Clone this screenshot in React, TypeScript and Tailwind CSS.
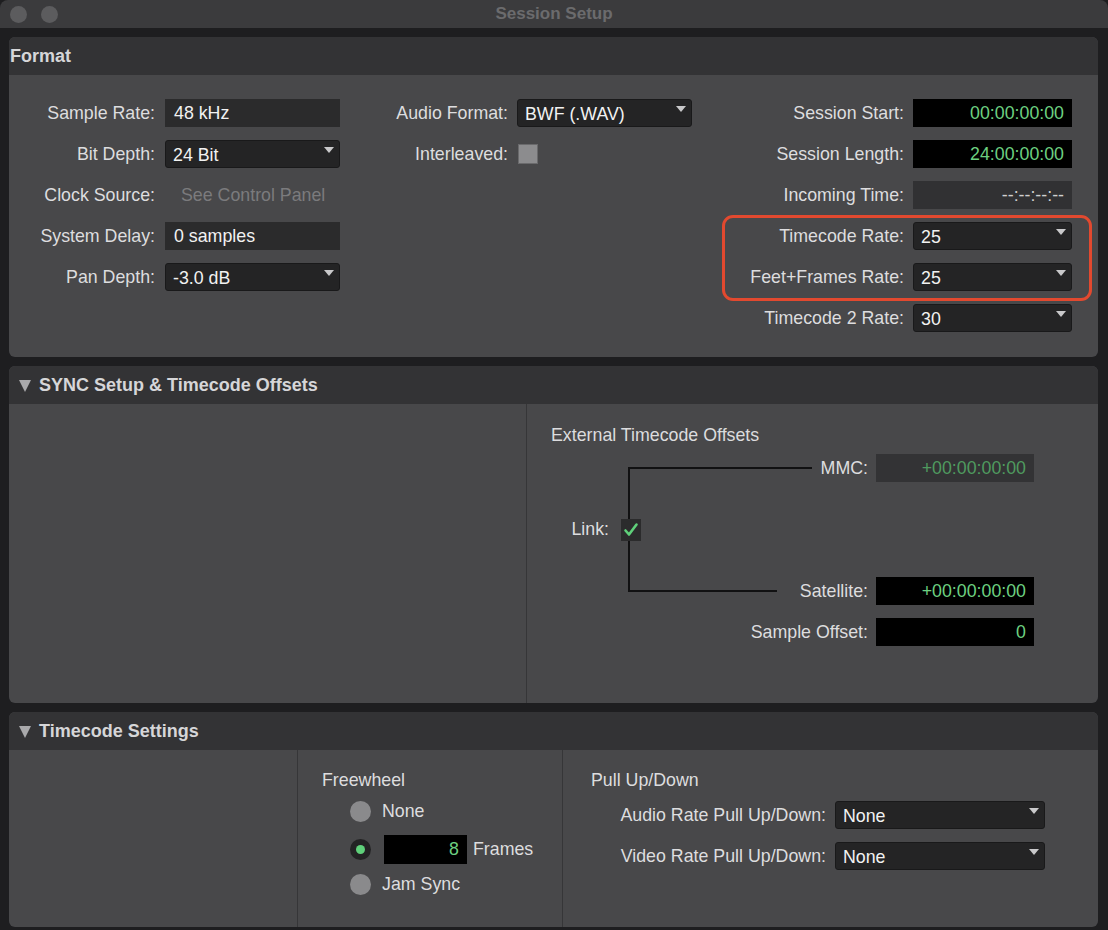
import React from "react";

const FONT = { fontFamily: '"Liberation Sans", Arial, Helvetica, sans-serif' };

function Tri() {
  return (
    <span className="ml-auto mr-[5px] mt-[6px] h-0 w-0 self-start border-l-[5px] border-r-[5px] border-t-[6px] border-l-transparent border-r-transparent border-t-[#c9c9cb]" />
  );
}

function Dropdown({ value, w }: { value: string; w: string }) {
  return (
    <div className={`flex h-[28px] items-center rounded-[3px] border border-[#19191a] bg-[#242425] pl-[7px] text-[#f2f2f2] ${w}`}>
      <span className="pt-[2px]">{value}</span>
      <Tri />
    </div>
  );
}

function Field({ value, w }: { value: string; w: string }) {
  return (
    <div className={`flex h-[28px] items-center bg-[#2b2b2c] pl-[9px] text-[#f2f2f2] ${w}`}>{value}</div>
  );
}

function TC({ value, w, dim, dark }: { value: string; w: string; dim?: boolean; dark?: boolean }) {
  const cls = dark
    ? "bg-[#313133] text-[#cfcfcf]"
    : dim
    ? "bg-[#333335] text-[#4f9a5f]"
    : "bg-black text-[#6dd081]";
  return (
    <div className={`flex h-[28px] items-center justify-end pr-[8px] ${cls} ${w}`}>{value}</div>
  );
}

function Row({ label, lw, children }: { label: string; lw: string; children: React.ReactNode }) {
  return (
    <div className="flex h-[28px] items-center">
      <div className={`${lw} shrink-0 text-right text-[#dddddf]`}>{label}</div>
      {children}
    </div>
  );
}

function Header({ title, arrow }: { title: string; arrow?: boolean }) {
  return (
    <div className="flex h-[38px] items-center rounded-t-[6px] bg-[#333335] text-[18px] font-bold text-[#d6d6d8]">
      {arrow ? (
        <>
          <span className="ml-[10px] mr-[8px] mt-[2px] h-0 w-0 border-l-[6px] border-r-[6px] border-t-[12px] border-l-transparent border-r-transparent border-t-[#a9a9ab]" />
          <span>{title}</span>
        </>
      ) : (
        <span className="ml-[1px]">{title}</span>
      )}
    </div>
  );
}

function Radio({ on }: { on?: boolean }) {
  return on ? (
    <span className="flex h-[21px] w-[21px] shrink-0 items-center justify-center rounded-full bg-[#232324]">
      <span className="h-[9px] w-[9px] rounded-full bg-[#5fd07a]" />
    </span>
  ) : (
    <span className="h-[21px] w-[21px] shrink-0 rounded-full bg-[#8a8a8c]" />
  );
}

export default function App() {
  return (
    <div style={FONT} className="h-[930px] w-[1108px] overflow-hidden bg-[#1e1e20] text-[17.8px]">
      {/* Title bar */}
      <div className="relative flex h-[28px] items-center rounded-t-[8px] bg-[#3b3b3d]">
        <span className="ml-[10px] h-[17px] w-[17px] rounded-full bg-[#5c5c5e]" />
        <span className="ml-[14px] h-[17px] w-[17px] rounded-full bg-[#5c5c5e]" />
        <div className="absolute inset-0 flex items-center justify-center text-[17px] font-bold text-[#6b6b6d]">
          Session Setup
        </div>
      </div>

      <div className="flex flex-col gap-[9px] pl-[9px] pr-[10px] pt-[9px]">
        {/* Format */}
        <div className="rounded-[6px] bg-[#48484a]">
          <Header title="Format" />
          <div className="relative flex h-[282px] pt-[24px]">
            <div className="flex flex-col gap-[13px]">
              <Row label="Sample Rate:" lw="w-[156px] pr-[10px]">
                <Field value="48 kHz" w="w-[175px]" />
              </Row>
              <Row label="Bit Depth:" lw="w-[156px] pr-[10px]">
                <Dropdown value="24 Bit" w="w-[175px]" />
              </Row>
              <Row label="Clock Source:" lw="w-[156px] pr-[10px]">
                <span className="pl-[16px] text-[#7b7b7d]">See Control Panel</span>
              </Row>
              <Row label="System Delay:" lw="w-[156px] pr-[10px]">
                <Field value="0 samples" w="w-[175px]" />
              </Row>
              <Row label="Pan Depth:" lw="w-[156px] pr-[10px]">
                <Dropdown value="-3.0 dB" w="w-[175px]" />
              </Row>
            </div>
            <div className="ml-[7px] flex flex-col gap-[13px]">
              <Row label="Audio Format:" lw="w-[170px] pr-[9px]">
                <Dropdown value="BWF (.WAV)" w="w-[175px]" />
              </Row>
              <Row label="Interleaved:" lw="w-[170px] pr-[9px]">
                <span className="ml-[1px] h-[20px] w-[20px] border border-[#6a6a6c] bg-[#8c8c8e]" />
              </Row>
            </div>
            <div className="ml-[8px] flex flex-col gap-[13px]">
              <Row label="Session Start:" lw="w-[213px] pr-[9px]">
                <TC value="00:00:00:00" w="w-[159px]" />
              </Row>
              <Row label="Session Length:" lw="w-[213px] pr-[9px]">
                <TC value="24:00:00:00" w="w-[159px]" />
              </Row>
              <Row label="Incoming Time:" lw="w-[213px] pr-[9px]">
                <TC value="--:--:--:--" w="w-[159px]" dark />
              </Row>
              <Row label="Timecode Rate:" lw="w-[213px] pr-[9px]">
                <Dropdown value="25" w="w-[159px]" />
              </Row>
              <Row label="Feet+Frames Rate:" lw="w-[213px] pr-[9px]">
                <Dropdown value="25" w="w-[159px]" />
              </Row>
              <Row label="Timecode 2 Rate:" lw="w-[213px] pr-[9px]">
                <Dropdown value="30" w="w-[159px]" />
              </Row>
            </div>
            <div className="pointer-events-none absolute left-[713px] top-[140px] h-[86px] w-[370px] rounded-[11px] border-[3px] border-[#e2492f]" />
          </div>
        </div>

        {/* SYNC */}
        <div className="rounded-[6px] bg-[#48484a]">
          <Header title="SYNC Setup & Timecode Offsets" arrow />
          <div className="flex h-[299px]">
            <div className="w-[518px] border-r border-[#363638]" />
            <div className="relative flex flex-1 flex-col pl-[24px] pr-[64px] pt-[20px]">
              <svg className="absolute left-0 top-0" width="300" height="200">
                <path d="M285 64 H102 V187 H250" fill="none" stroke="#111112" strokeWidth="2" />
              </svg>
              <div className="relative h-[22px] leading-[22px] text-[#dcdcde]">External Timecode Offsets</div>
              <div className="relative mt-[8px] flex h-[28px] items-center justify-end">
                <span className="pr-[8px] text-[#dddddf]">MMC:</span>
                <TC value="+00:00:00:00" w="w-[158px]" dim />
              </div>
              <div className="relative flex h-[95px] items-center">
                <span className="w-[58px] text-right text-[#dddddf]">Link:</span>
                <span className="ml-[12px] flex h-[22px] w-[20px] items-center justify-center bg-[#2b2b2c]">
                  <svg width="16" height="16" viewBox="0 0 16 16">
                    <path d="M2.5 8.5 L6 12.5 L13.5 2.5" fill="none" stroke="#5fd07a" strokeWidth="2.6" strokeLinecap="round" strokeLinejoin="round" />
                  </svg>
                </span>
              </div>
              <div className="relative flex h-[28px] items-center justify-end">
                <span className="pr-[8px] text-[#dddddf]">Satellite:</span>
                <TC value="+00:00:00:00" w="w-[158px]" />
              </div>
              <div className="relative mt-[13px] flex h-[28px] items-center justify-end">
                <span className="pr-[8px] text-[#dddddf]">Sample Offset:</span>
                <TC value="0" w="w-[158px]" />
              </div>
            </div>
          </div>
        </div>

        {/* Timecode Settings */}
        <div className="rounded-[6px] bg-[#48484a]">
          <Header title="Timecode Settings" arrow />
          <div className="flex h-[177px]">
            <div className="w-[289px] border-r border-[#363638]" />
            <div className="flex w-[265px] flex-col border-r border-[#363638] pl-[24px] pt-[19px] text-[#dddddf]">
              <div className="h-[22px] leading-[22px]">Freewheel</div>
              <div className="ml-[28px] mt-[10px] flex h-[21px] items-center gap-[11px]">
                <Radio />
                <span>None</span>
              </div>
              <div className="ml-[28px] mt-[13px] flex h-[29px] items-center">
                <Radio on />
                <span className="ml-[13px] flex h-[29px] w-[83px] items-center justify-end bg-black pr-[8px] text-[#6dd081]">8</span>
                <span className="ml-[6px]">Frames</span>
              </div>
              <div className="ml-[28px] mt-[10px] flex h-[21px] items-center gap-[11px]">
                <Radio />
                <span>Jam Sync</span>
              </div>
            </div>
            <div className="flex flex-1 flex-col pl-[28px] pt-[19px] text-[#dddddf]">
              <div className="h-[22px] leading-[22px]">Pull Up/Down</div>
              <div className="mt-[10px] flex h-[28px] items-center">
                <span className="w-[244px] pr-[9px] text-right">Audio Rate Pull Up/Down:</span>
                <Dropdown value="None" w="w-[210px]" />
              </div>
              <div className="mt-[13px] flex h-[28px] items-center">
                <span className="w-[244px] pr-[9px] text-right">Video Rate Pull Up/Down:</span>
                <Dropdown value="None" w="w-[210px]" />
              </div>
            </div>
          </div>
        </div>
      </div>
    </div>
  );
}
